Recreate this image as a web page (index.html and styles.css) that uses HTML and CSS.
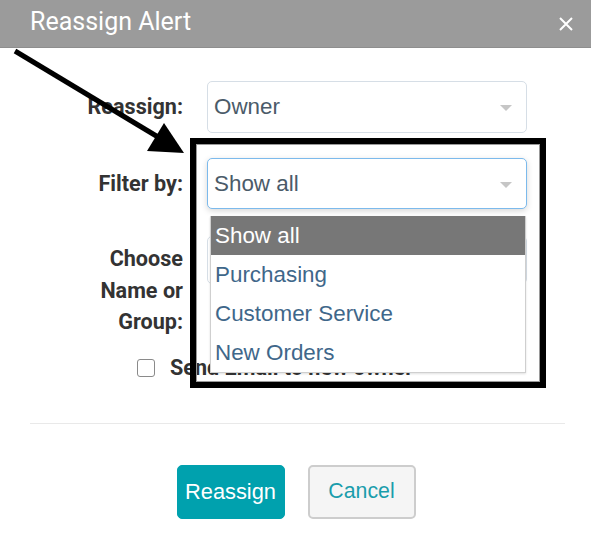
FILE: index.html
```html
<!DOCTYPE html>
<html lang="en">
<head>
<meta charset="utf-8">
<title>Reassign Alert</title>
<link rel="stylesheet" href="styles.css">
</head>
<body>
<div class="modal">
  <header class="modal-header">
    <h1 class="modal-title">Reassign Alert</h1>
    <span class="close" aria-label="Close">
      <svg width="16" height="16" viewBox="0 0 16 16"><path d="M2 2 L14 14 M14 2 L2 14" stroke="#fff" stroke-width="2" fill="none"/></svg>
    </span>
  </header>

  <div class="modal-body">
    <div class="form-row row-reassign">
      <label class="form-label">Reassign:</label>
      <div class="select"><span class="select-text">Owner</span><span class="caret"></span></div>
    </div>
    <div class="form-row row-filter">
      <label class="form-label">Filter by:</label>
      <div class="select-wrap">
        <div class="select focused"><span class="select-text">Show all</span><span class="caret"></span></div>
        <ul class="dropdown">
          <li class="option active">Show all</li>
          <li class="option">Purchasing</li>
          <li class="option">Customer Service</li>
          <li class="option">New Orders</li>
        </ul>
      </div>
    </div>
    <div class="form-row row-choose">
      <label class="form-label multi">Choose<br>Name or<br>Group:</label>
      <div class="select short"></div>
    </div>
    <div class="check-row">
      <span class="checkbox"></span>
      <span class="check-label">Send Email to new owner</span>
    </div>
  </div>

  <div class="divider"></div>

  <div class="modal-footer">
    <button class="btn btn-primary">Reassign</button>
    <button class="btn btn-default">Cancel</button>
  </div>

  <div class="highlight-box"></div>
  <svg class="annot-arrow" width="200" height="160" viewBox="0 0 200 160">
    <line x1="15" y1="51" x2="158" y2="137" stroke="#000" stroke-width="5"/>
    <polygon points="164,123 147,151 184,153" fill="#000"/>
  </svg>
</div>
</body>
</html>
```

FILE: styles.css
```css
html, body {
  margin: 0;
  padding: 0;
  background: #fff;
}

.modal {
  position: relative;
  width: 591px;
  height: 553px;
  overflow: hidden;
  background: #fff;
}

.modal-header {
  height: 47px;
  background: #9b9b9b;
  border-bottom: 1px solid #8e8e8e;
  display: flex;
  align-items: center;
  justify-content: space-between;
  padding: 0 17px 0 30px;
}

.modal-title {
  margin: 0;
  font-family: Roboto, "Liberation Sans", sans-serif;
  font-weight: 400;
  font-size: 25px;
  color: #fff;
  line-height: 1;
  padding-bottom: 4px;
}

.close {
  display: flex;
  width: 16px;
  height: 16px;
}

.modal-body {
  padding-top: 33px;
  display: flex;
  flex-direction: column;
}

.form-row {
  display: grid;
  grid-template-columns: 183px 320px;
  column-gap: 24px;
  align-items: center;
}

.row-filter {
  margin-top: 25px;
  position: relative;
  z-index: 2;
}

.row-choose {
  margin-top: 27px;
  align-items: start;
}

.form-label {
  text-align: right;
  font-family: Roboto, "Liberation Sans", sans-serif;
  font-weight: 700;
  font-size: 21.6px;
  color: #333;
  line-height: 26px;
}

.form-label.multi {
  line-height: 31.5px;
  padding-top: 7px;
}

.select {
  position: relative;
  box-sizing: border-box;
  height: 52px;
  border: 1px solid #d6dee6;
  border-radius: 5px;
  background: #fff;
  display: flex;
  align-items: center;
  padding-left: 6px;
}

.select.short {
  height: 48px;
}

.select.focused {
  height: 51px;
  border-color: #7cbaec;
  box-shadow: 0 2px 6px rgba(0, 0, 0, 0.16);
}

.select-text {
  font-family: "Liberation Sans", Arial, sans-serif;
  font-size: 22.4px;
  color: #4b5b69;
}

.caret {
  position: absolute;
  right: 14px;
  top: 50%;
  margin-top: -2px;
  width: 0;
  height: 0;
  border-left: 6px solid transparent;
  border-right: 6px solid transparent;
  border-top: 6px solid #c6c6c6;
}

.select-wrap {
  position: relative;
}

.dropdown {
  position: absolute;
  left: 3px;
  right: 1px;
  top: 58px;
  margin: 0;
  padding: 0;
  list-style: none;
  background: #fff;
  border: 1px solid #cfcfcf;
  border-top: none;
  box-shadow: 0 1px 2px rgba(0, 0, 0, 0.12);
  z-index: 3;
}

.option {
  height: 39px;
  line-height: 39px;
  padding-left: 4px;
  font-family: "Liberation Sans", Arial, sans-serif;
  font-size: 22.4px;
  color: #3f678a;
}

.option.active {
  background: #777;
  color: #fff;
}

.check-row {
  display: flex;
  align-items: center;
  gap: 15px;
  padding-left: 137px;
  margin-top: 18px;
  height: 24px;
}

.checkbox {
  box-sizing: border-box;
  width: 18px;
  height: 18px;
  border: 1.5px solid #8a8a8a;
  border-radius: 3px;
  background: #fff;
}

.check-label {
  font-family: Roboto, "Liberation Sans", sans-serif;
  font-weight: 700;
  font-size: 21.6px;
  color: #333;
}

.divider {
  margin: 43px 26px 0 30px;
  height: 1px;
  background: #e9e9e9;
}

.modal-footer {
  display: flex;
  justify-content: center;
  gap: 23px;
  padding-top: 41px;
  padding-left: 1px;
}

.btn {
  box-sizing: border-box;
  width: 108px;
  height: 54px;
  border-radius: 5px;
  font-family: "Liberation Sans", Arial, sans-serif;
  font-size: 21.8px;
  cursor: pointer;
  padding: 0;
}

.btn-primary {
  background: #00a1ae;
  border: 1px solid #00a1ae;
  color: #fff;
}

.btn-default {
  background: #f5f5f5;
  border: 2px solid #cdcdcd;
  color: #1a9dac;
  font-size: 21.3px;
}

.highlight-box {
  position: absolute;
  left: 190px;
  top: 138px;
  width: 356px;
  height: 250px;
  box-sizing: border-box;
  border: 6px solid #000;
  box-shadow: inset 0 0 0 1px #9a9a9a;
  z-index: 4;
  pointer-events: none;
}

.annot-arrow {
  position: absolute;
  left: 0;
  top: 0;
  z-index: 5;
  pointer-events: none;
}
```
